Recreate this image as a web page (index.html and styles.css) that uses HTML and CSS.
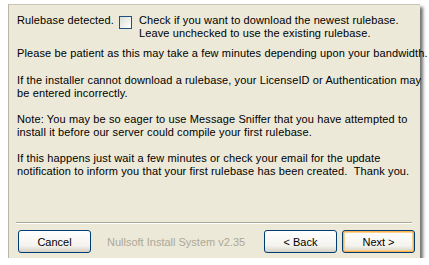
FILE: index.html
```html
<!DOCTYPE html>
<html>
<head>
<meta charset="utf-8">
<link rel="stylesheet" href="styles.css">
</head>
<body>
<div class="window">
  <div class="content">
    <div class="row-check">
      <span class="label">Rulebase detected.</span>
      <span class="checkbox"></span>
      <span class="check-text">Check if you want to download the newest rulebase.<br>Leave unchecked to use the existing rulebase.</span>
    </div>
    <p class="p1">Please be patient as this may take a few minutes depending upon your bandwidth.</p>
    <p class="p2">If the installer cannot download a rulebase, your LicenseID or Authentication may<br>be entered incorrectly.</p>
    <p>Note: You may be so eager to use Message Sniffer that you have attempted to<br>install it before our server could compile your first rulebase.</p>
    <p>If this happens just wait a few minutes or check your email for the update<br>notification to inform you that your first rulebase has been created.&nbsp; Thank you.</p>
  </div>
  <div class="separator"></div>
  <div class="footer">
    <button class="btn">Cancel</button>
    <span class="brand">Nullsoft Install System v2.35</span>
    <button class="btn">&lt; Back</button>
    <button class="btn default">Next &gt;</button>
  </div>
</div>
</body>
</html>
```
FILE: styles.css
```css
html, body {
  margin: 0;
  padding: 0;
  background: #ffffff;
}
body {
  padding: 4px 0 0 8px;
  font-family: "Liberation Sans", Arial, sans-serif;
  font-size: 11px;
  color: #000;
}
.window {
  width: 412px;
  height: 254px;
  box-sizing: border-box;
  background: #ECE9D8;
  border-top: 1px solid #c8c5b6;
  border-left: 1px solid #b9b6a6;
  box-shadow: 3px 3px 3px rgba(0,0,0,0.55);
  display: flex;
  flex-direction: column;
}
.content {
  padding: 9px 0 0 8px;
  flex: 1;
  line-height: 13px;
  white-space: nowrap;
  letter-spacing: 0.12px;
}
.row-check {
  display: flex;
  align-items: flex-start;
}
.label { margin-right: 5px; }
.checkbox {
  width: 11px;
  height: 11px;
  border: 1px solid #1C5180;
  background: linear-gradient(135deg, #DCDCD7, #ffffff);
  margin-top: 2px;
  margin-right: 7px;
  flex: none;
}
p { margin: 13px 0 0 0; }
p.p1 { margin-top: 7px; }
p.p2 { margin-top: 14px; }
.separator {
  height: 0;
  border-top: 1px solid #ACA899;
  border-bottom: 1px solid #ffffff;
  margin: 0 8px 0 7px;
}
.footer {
  display: flex;
  align-items: center;
  padding: 6px 5px 5px 9px;
}
.btn {
  flex: none;
  width: 73px;
  height: 23px;
  box-sizing: border-box;
  border: 1px solid #003C74;
  border-radius: 3px;
  background: linear-gradient(#ffffff, #F4F3EE 70%, #D6D0C5);
  font: 11px "Liberation Sans", Arial, sans-serif;
  color: #000;
  padding: 0;
}
.btn.default {
  box-shadow: inset 0 0 0 1px #F8B34F, inset 0 0 0 2px #FCD28C;
  margin-left: 5px;
}
.brand {
  color: #ACA899;
  margin: 0 auto 0 16px;
}
```
